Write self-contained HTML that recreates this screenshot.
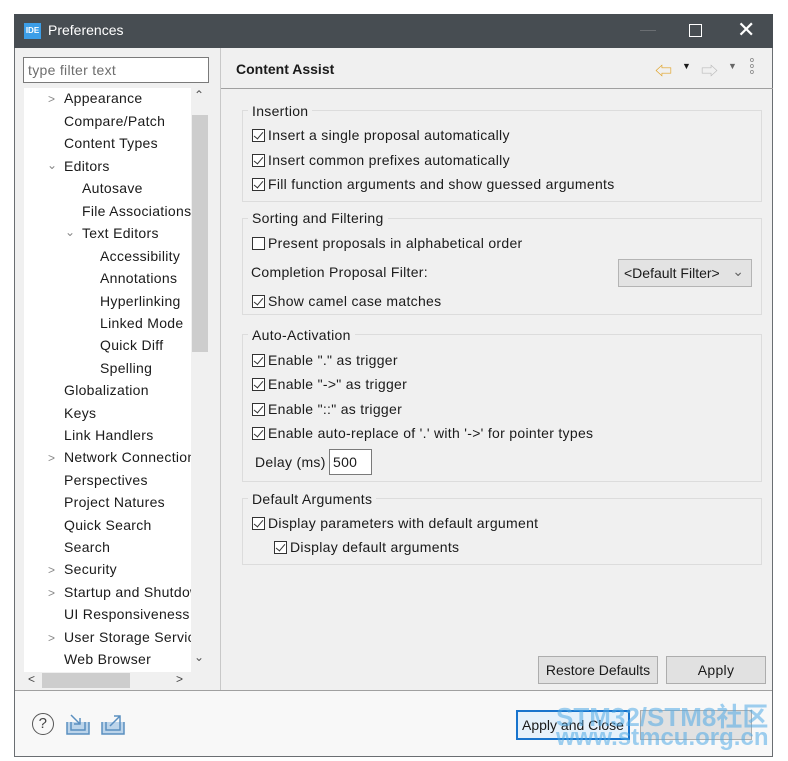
<!DOCTYPE html>
<html><head><meta charset="utf-8"><style>
*{margin:0;padding:0;box-sizing:border-box}
body{width:788px;height:761px;background:#fff;position:relative;overflow:hidden;font-family:"Liberation Sans","Noto Sans CJK SC",sans-serif;font-size:14px;color:#1a1a1a;letter-spacing:0.3px}
.a{position:absolute;white-space:nowrap}
.win{position:absolute;left:14px;top:14px;width:759px;height:743px;background:#f0f0f0;border:1px solid #6a6e72;border-top:none}
.title{position:absolute;left:14px;top:14px;width:759px;height:34px;background:#474d52;color:#fff;letter-spacing:0}
.cb{position:absolute;width:13px;height:13px;border:1px solid #333;background:#fff}
.cb.c::after{content:"";position:absolute;left:3px;top:0px;width:4px;height:8px;border:solid #333;border-width:0 1.5px 1.5px 0;transform:rotate(40deg)}
.grp{position:absolute;left:242px;width:520px;border:1px solid #dcdcdc}
.lg{position:absolute;background:#f0f0f0;padding:0 4px 0 4px}
.t{position:absolute;white-space:nowrap}
.arr{position:absolute;color:#888;font-size:12px}
.btn{position:absolute;background:#e1e1e1;border:1px solid #adadad;text-align:center;line-height:26px}
</style></head><body>
<div class="win"></div>
<div class="title">
 <div class="a" style="left:10px;top:9px;width:17px;height:16px;background:#3c9ee8;color:#fff;font-size:8px;font-weight:bold;line-height:16px;text-align:center">IDE</div>
 <div class="a" style="left:34px;top:8px;font-size:14px;color:#fff">Preferences</div>
 <div class="a" style="top:16px;width:16px;height:1px;background:#6a6e72;left:626px"></div>
 <div class="a" style="left:675px;top:10px;width:13px;height:13px;border:1.5px solid #fff"></div>
 <div class="a" style="left:723px;top:3px;font-size:22px;color:#fff;font-weight:300">✕</div>
</div>
<!-- left panel -->
<div class="a" style="left:23px;top:57px;width:186px;height:26px;background:#fff;border:1px solid #7a7a7a;color:#6d6d6d;padding:4px 4px;font-size:14px">type filter text</div>
<div class="a" style="left:24px;top:88px;width:167px;height:584px;background:#fff;overflow:hidden">
 <div class="arr" style="left:24px;top:4px">&gt;</div><div class="t" style="left:40px;top:2px">Appearance</div>
 <div class="t" style="left:40px;top:25px">Compare/Patch</div>
 <div class="t" style="left:40px;top:47px">Content Types</div>
 <div class="arr" style="left:23px;top:70px">&#8964;</div><div class="t" style="left:40px;top:70px">Editors</div>
 <div class="t" style="left:58px;top:92px">Autosave</div>
 <div class="t" style="left:58px;top:115px">File Associations</div>
 <div class="arr" style="left:41px;top:137px">&#8964;</div><div class="t" style="left:58px;top:137px">Text Editors</div>
 <div class="t" style="left:76px;top:160px">Accessibility</div>
 <div class="t" style="left:76px;top:182px">Annotations</div>
 <div class="t" style="left:76px;top:205px">Hyperlinking</div>
 <div class="t" style="left:76px;top:227px">Linked Mode</div>
 <div class="t" style="left:76px;top:249px">Quick Diff</div>
 <div class="t" style="left:76px;top:272px">Spelling</div>
 <div class="t" style="left:40px;top:294px">Globalization</div>
 <div class="t" style="left:40px;top:317px">Keys</div>
 <div class="t" style="left:40px;top:339px">Link Handlers</div>
 <div class="arr" style="left:24px;top:363px">&gt;</div><div class="t" style="left:40px;top:361px">Network Connections</div>
 <div class="t" style="left:40px;top:384px">Perspectives</div>
 <div class="t" style="left:40px;top:406px">Project Natures</div>
 <div class="t" style="left:40px;top:429px">Quick Search</div>
 <div class="t" style="left:40px;top:451px">Search</div>
 <div class="arr" style="left:24px;top:475px">&gt;</div><div class="t" style="left:40px;top:473px">Security</div>
 <div class="arr" style="left:24px;top:498px">&gt;</div><div class="t" style="left:40px;top:496px">Startup and Shutdown</div>
 <div class="t" style="left:40px;top:518px">UI Responsiveness</div>
 <div class="arr" style="left:24px;top:543px">&gt;</div><div class="t" style="left:40px;top:541px">User Storage Service</div>
 <div class="t" style="left:40px;top:563px">Web Browser</div>
</div>
<div class="a" style="left:191px;top:88px;width:18px;height:584px;background:#f0f0f0"></div>
<div class="a" style="left:192px;top:115px;width:16px;height:237px;background:#cdcdcd"></div>
<div class="a" style="left:194px;top:88px;font-size:12px;color:#555">&#8963;</div>
<div class="a" style="left:194px;top:650px;font-size:12px;color:#555">&#8964;</div>
<div class="a" style="left:24px;top:672px;width:167px;height:17px;background:#f0f0f0"></div>
<div class="a" style="left:42px;top:673px;width:88px;height:15px;background:#cdcdcd"></div>
<div class="a" style="left:28px;top:672px;font-size:12px;color:#444">&lt;</div>
<div class="a" style="left:176px;top:672px;font-size:12px;color:#444">&gt;</div>
<div class="a" style="left:220px;top:48px;width:1px;height:642px;background:#c8c8c8"></div>
<!-- right header -->
<div class="a" style="left:236px;top:61px;font-weight:bold;font-size:14px;letter-spacing:0">Content Assist</div>
<div class="a" style="left:655px;top:57px;color:#e0a020;font-size:17px">⇦</div>
<div class="a" style="left:682px;top:61px;font-size:9px">▼</div>
<div class="a" style="left:701px;top:57px;color:#bbb;font-size:17px">⇨</div>
<div class="a" style="left:728px;top:61px;font-size:9px;color:#666">▼</div>
<div class="a" style="left:750px;top:58px;font-size:7px;line-height:6px;color:#666">o<br>o<br>o</div>
<div class="a" style="left:221px;top:88px;width:552px;height:1px;background:#a0a0a0"></div>
<!-- groups -->
<div class="grp" style="top:110px;height:92px"></div><div class="lg t" style="left:248px;top:103px">Insertion</div>
<div class="cb c" style="left:252px;top:129px"></div><div class="t" style="left:268px;top:127px">Insert a single proposal automatically</div>
<div class="cb c" style="left:252px;top:154px"></div><div class="t" style="left:268px;top:152px">Insert common prefixes automatically</div>
<div class="cb c" style="left:252px;top:178px"></div><div class="t" style="left:268px;top:176px">Fill function arguments and show guessed arguments</div>

<div class="grp" style="top:218px;height:97px"></div><div class="lg t" style="left:248px;top:210px">Sorting and Filtering</div>
<div class="cb" style="left:252px;top:237px"></div><div class="t" style="left:268px;top:235px">Present proposals in alphabetical order</div>
<div class="t" style="left:251px;top:264px">Completion Proposal Filter:</div>
<div class="a" style="left:618px;top:259px;width:134px;height:28px;background:#e3e3e3;border:1px solid #b4b4b4;padding:5px 5px;letter-spacing:0">&lt;Default Filter&gt; <span style="position:absolute;right:7px;top:3px;color:#666">&#8964;</span></div>
<div class="cb c" style="left:252px;top:295px"></div><div class="t" style="left:268px;top:293px">Show camel case matches</div>

<div class="grp" style="top:334px;height:148px"></div><div class="lg t" style="left:248px;top:327px">Auto-Activation</div>
<div class="cb c" style="left:252px;top:354px"></div><div class="t" style="left:268px;top:352px">Enable "." as trigger</div>
<div class="cb c" style="left:252px;top:378px"></div><div class="t" style="left:268px;top:376px">Enable "-&gt;" as trigger</div>
<div class="cb c" style="left:252px;top:403px"></div><div class="t" style="left:268px;top:401px">Enable "::" as trigger</div>
<div class="cb c" style="left:252px;top:427px"></div><div class="t" style="left:268px;top:425px">Enable auto-replace of '.' with '-&gt;' for pointer types</div>
<div class="t" style="left:255px;top:454px">Delay (ms)</div>
<div class="a" style="left:329px;top:449px;width:43px;height:26px;background:#fff;border:1px solid #7a7a7a;padding:4px 3px">500</div>

<div class="grp" style="top:498px;height:67px"></div><div class="lg t" style="left:248px;top:491px">Default Arguments</div>
<div class="cb c" style="left:252px;top:517px"></div><div class="t" style="left:268px;top:515px">Display parameters with default argument</div>
<div class="cb c" style="left:274px;top:541px"></div><div class="t" style="left:290px;top:539px">Display default arguments</div>

<div class="btn" style="left:538px;top:656px;width:120px;height:28px;letter-spacing:0">Restore Defaults</div>
<div class="btn" style="left:666px;top:656px;width:100px;height:28px">Apply</div>
<!-- bottom -->
<div class="a" style="left:15px;top:690px;width:757px;height:1px;background:#a0a0a0"></div>
<div class="a" style="left:15px;top:691px;width:757px;height:65px;background:#f8f8f8"></div>
<div class="a" style="left:32px;top:713px;width:22px;height:22px;border:1.5px solid #555;border-radius:50%;text-align:center;line-height:19px;font-size:15px;color:#444">?</div>
<svg class="a" style="left:65px;top:712px" width="60" height="24"><g fill="none" stroke="#5a8fc0" stroke-width="1.5"><path d="M2 10v12h22v-12M6 10v8h14v-8" fill="#bcd4ea"/><path d="M6 3l9 9M15 6v6h-6"/><path d="M37 10v12h22v-12M41 10v8h14v-8" fill="#bcd4ea"/><path d="M45 14l10-10M49 4h6v6"/></g></svg>
<div class="btn" style="left:516px;top:710px;width:114px;height:30px;border:2px solid #1874cd;background:#e5f1fb;line-height:26px;letter-spacing:0">Apply and Close</div>
<div class="btn" style="left:640px;top:710px;width:112px;height:30px"></div>
<div class="a" style="left:556px;top:697px;font-size:26px;font-weight:bold;color:rgba(80,170,230,0.55);letter-spacing:0">STM32/STM8社区</div>
<div class="a" style="left:556px;top:724px;font-size:24px;font-weight:bold;color:rgba(80,170,230,0.55);letter-spacing:0">www.stmcu.org.cn</div>
</body></html>
